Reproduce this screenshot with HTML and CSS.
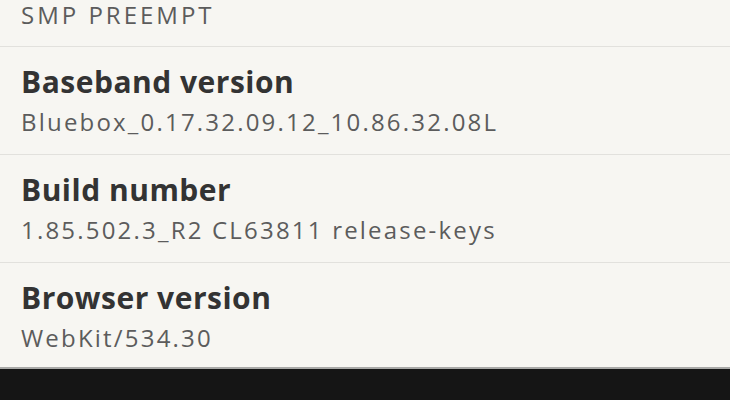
FILE: index.html
```html
<!DOCTYPE html>
<html>
<head>
<meta charset="utf-8">
<link rel="stylesheet" href="styles.css">
</head>
<body>
<div class="screen">
  <div class="list">
    <div class="row row-partial">
      <div class="sub">SMP PREEMPT</div>
    </div>
    <div class="row">
      <div class="title">Baseband version</div>
      <div class="sub">Bluebox_0.17.32.09.12_10.86.32.08L</div>
    </div>
    <div class="row">
      <div class="title">Build number</div>
      <div class="sub">1.85.502.3_R2 CL63811 release-keys</div>
    </div>
    <div class="row row-last">
      <div class="title">Browser version</div>
      <div class="sub">WebKit/534.30</div>
    </div>
  </div>
  <div class="navbar"></div>
</div>
</body>
</html>
```
FILE: styles.css
```css
html, body {
  margin: 0;
  padding: 0;
  width: 730px;
  height: 400px;
  overflow: hidden;
  background: #151515;
}
.screen {
  display: flex;
  flex-direction: column;
  height: 400px;
}
.list {
  background: #f7f6f2;
  display: flex;
  flex-direction: column;
  border-bottom: 2px solid #a9a9a7;
}
.row {
  border-bottom: 1px solid #e2e1dd;
  padding-left: 21px;
  box-sizing: border-box;
  height: 108px;
  font-family: "Open Sans", "Noto Sans", sans-serif;
}
.row-partial {
  height: 47px;
}
.row-last {
  border-bottom: none;
  height: 104px;
}
.title {
  font-size: 30px;
  font-weight: 700;
  color: #333333;
  line-height: 34px;
  letter-spacing: 0.5px;
  padding-top: 18px;
}
.sub {
  font-size: 24px;
  color: #5c5c5c;
  line-height: 30px;
  letter-spacing: 2.2px;
  margin-top: 8px;
}
.row-partial .sub {
  margin-top: 0;
  letter-spacing: 3px;
}
.navbar {
  flex: 1;
  background: #151515;
}
```
